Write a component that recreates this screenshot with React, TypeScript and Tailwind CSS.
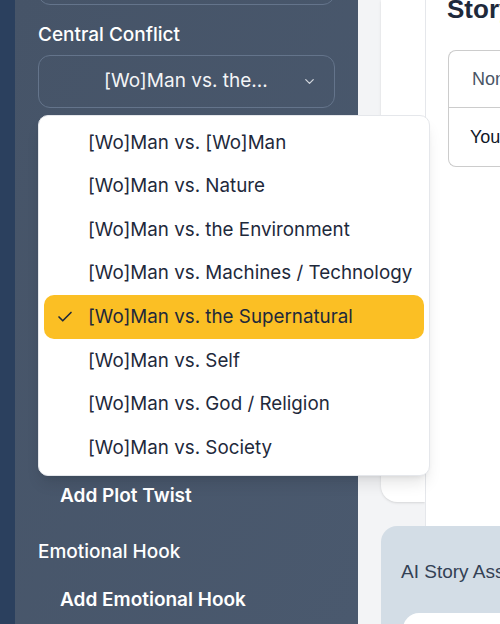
import React from "react";
import { Check, ChevronDown } from "lucide-react";

const options = [
  "[Wo]Man vs. [Wo]Man",
  "[Wo]Man vs. Nature",
  "[Wo]Man vs. the Environment",
  "[Wo]Man vs. Machines / Technology",
  "[Wo]Man vs. the Supernatural",
  "[Wo]Man vs. Self",
  "[Wo]Man vs. God / Religion",
  "[Wo]Man vs. Society",
];

export default function App() {
  return (
    <div className="relative flex h-[624px] w-[500px] overflow-hidden" style={{ fontFamily: "Inter, 'Noto Sans', sans-serif" }}>
      <div className="w-[15px] shrink-0 bg-[#2b405e]" />
      <div className="flex w-[343px] shrink-0 flex-col bg-gradient-to-br from-[#465468] to-[#4a596e] px-[23px] text-white">
        <div className="-mt-[50px] h-[55px] shrink-0 rounded-xl border border-[#64748b]" />
        <div className="mt-[16px] text-[19px] font-medium leading-[28px]">Central Conflict</div>
        <div className="mt-[6px] flex h-[53px] items-center rounded-xl border border-[#64748b] pl-[65px] pr-[17px]">
          <span className="flex-1 text-[19px] text-gray-100">[Wo]Man vs. the...</span>
          <ChevronDown size={15} strokeWidth={2} className="text-gray-300" />
        </div>
        <div className="h-[366px] shrink-0" />
        <div className="flex h-[44px] items-center px-[22px] text-[19px] font-semibold">Add Plot Twist</div>
        <div className="mt-[20px] text-[19px] font-medium leading-[28px]">Emotional Hook</div>
        <div className="mt-[12px] flex h-[44px] items-center px-[22px] text-[19px] font-semibold">Add Emotional Hook</div>
      </div>
      <div className="flex flex-1 flex-col bg-gray-100 pl-[23px]">
        <div className="flex h-[526px] shrink-0">
          <div className="h-[502px] w-[44px] shrink-0 rounded-bl-2xl bg-white shadow-sm" />
          <div className="min-w-0 flex-1 border-l border-gray-200 bg-white pl-[21px]" style={{ fontFamily: "'Liberation Sans', Arial, sans-serif" }}>
            <div className="-mt-[7px] whitespace-nowrap text-[26px] font-bold leading-[32px] text-[#1e293b]">Story Builder</div>
            <div className="ml-px mt-[25px] overflow-hidden rounded-l-lg border border-r-0 border-[#cccccc]">
              <div className="flex h-[57px] items-center whitespace-nowrap border-b border-[#cccccc] pl-[23px] text-[18px] text-gray-600">None selected</div>
              <div className="flex h-[58px] items-center whitespace-nowrap pl-[21px] text-[18px] text-[#111827]">Your story</div>
            </div>
          </div>
        </div>
        <div className="flex-1 rounded-tl-2xl bg-[#d3dde6] pl-[20px] pt-[34px]" style={{ fontFamily: "'Liberation Sans', Arial, sans-serif" }}>
          <div className="whitespace-nowrap text-[19px] leading-[24px] text-[#334155]">AI Story Assistant</div>
          <div className="ml-[2px] mt-[29px] h-[20px] rounded-tl-2xl bg-white" />
        </div>
      </div>

      <div className="absolute left-[38px] top-[115px] w-[392px] rounded-[10px] border border-gray-200 bg-white px-[5px] py-[5px] shadow-lg">
        {options.map((o, i) => {
          const sel = i === 4;
          return (
            <div
              key={o}
              className={`flex h-[43.6px] items-center rounded-[10px] pl-[12px] text-[18.8px] text-[#1e293b] ${sel ? "bg-[#fbbf24]" : ""}`}
            >
              <div className="w-[32px] shrink-0">{sel ? <Check size={18} strokeWidth={2.2} /> : null}</div>
              <span className="whitespace-nowrap">{o}</span>
            </div>
          );
        })}
      </div>
    </div>
  );
}
